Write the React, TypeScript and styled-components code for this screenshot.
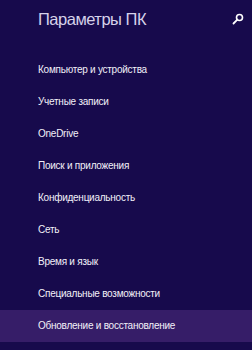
import React from 'react';
import styled, { createGlobalStyle } from 'styled-components';

const GlobalStyle = createGlobalStyle`
  html, body {
    margin: 0;
    padding: 0;
    background: #170a4c;
  }
  body {
    font-family: "Liberation Sans", sans-serif;
  }
`;

const Pane = styled.div`
  width: 252px;
  height: 350px;
  background: #170a4c;
  overflow: hidden;
  display: flex;
  flex-direction: column;
`;

const Header = styled.div`
  height: 54px;
  display: flex;
  align-items: flex-start;
  justify-content: space-between;
  padding: 7px 8px 0 38px;
  box-sizing: border-box;
`;

const Title = styled.h1`
  margin: 0;
  font-family: "Liberation Sans", sans-serif;
  font-weight: 400;
  font-size: 16.5px;
  letter-spacing: -0.5px;
  line-height: 24px;
  color: #d6d2ea;
`;

const SearchButton = styled.button`
  border: none;
  background: none;
  padding: 0;
  margin-top: 6px;
  width: 12px;
  height: 12px;
  display: flex;
  cursor: pointer;
`;

const List = styled.ul`
  list-style: none;
  margin: 0;
  padding: 0;
`;

const Item = styled.li<{ $active?: boolean }>`
  height: 32px;
  display: flex;
  align-items: center;
  padding-left: 38px;
  padding-bottom: 2px;
  box-sizing: border-box;
  font-family: "Liberation Sans", sans-serif;
  font-size: 10px;
  letter-spacing: -0.25px;
  color: #f2f0f8;
  background: ${({ $active }) => ($active ? '#361d68' : 'transparent')};
  white-space: nowrap;
`;

const items = [
  'Компьютер и устройства',
  'Учетные записи',
  'OneDrive',
  'Поиск и приложения',
  'Конфиденциальность',
  'Сеть',
  'Время и язык',
  'Специальные возможности',
  'Обновление и восстановление',
];

const App: React.FC = () => (
  <>
    <GlobalStyle />
    <Pane>
      <Header>
        <Title>Параметры ПК</Title>
        <SearchButton aria-label="Поиск">
          <svg width="12" height="12" viewBox="0 0 12 12">
            <circle cx="7.5" cy="4.5" r="3" fill="none" stroke="#ffffff" strokeWidth="1.6" />
            <line x1="5.3" y1="6.7" x2="1.5" y2="10.5" stroke="#ffffff" strokeWidth="1.8" strokeLinecap="round" />
          </svg>
        </SearchButton>
      </Header>
      <List>
        {items.map((label, i) => (
          <Item key={label} $active={i === items.length - 1}>
            {label}
          </Item>
        ))}
      </List>
    </Pane>
  </>
);

export default App;
